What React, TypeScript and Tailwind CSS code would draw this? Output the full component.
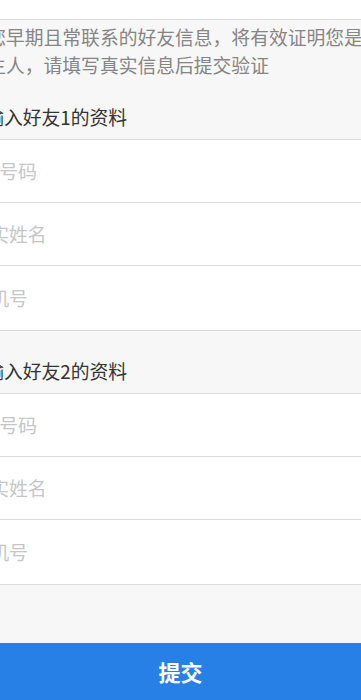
import React from "react";

function Row({ ph, h }: { ph: string; h: string }) {
  return (
    <div className={`${h} flex items-center overflow-hidden bg-white border-b border-[#dcdcdc]`}>
      <input
        className="ml-[-28.5px] w-[calc(100%+28.5px)] bg-transparent outline-none text-[18.8px] text-[#333] placeholder:text-[#c6c6c6]"
        placeholder={ph}
      />
    </div>
  );
}

function Group() {
  return (
    <div className="border-t border-[#dcdcdc]">
      <Row ph="QQ号码" h="h-[63px]" />
      <Row ph="真实姓名" h="h-[63px]" />
      <Row ph="手机号" h="h-[65px]" />
    </div>
  );
}

function Title({ text, pt }: { text: string; pt: string }) {
  return (
    <div className={`overflow-hidden ${pt} pb-[8px]`}>
      <div className="ml-[-14.8px] text-[18.8px] leading-[28px] text-[#333] whitespace-nowrap">{text}</div>
    </div>
  );
}

export default function App() {
  return (
    <div
      lang="zh-CN"
      className="w-[361px] h-[700px] flex flex-col bg-[#f7f7f7] overflow-hidden"
      style={{ fontFamily: '"Noto Sans CJK SC", "Noto Sans", sans-serif' }}
    >
      <div className="h-[20px] shrink-0 bg-white border-b border-[#dedede]" />
      <div className="overflow-hidden pt-[3px]">
        <div className="ml-[-12.8px] text-[18.8px] leading-[28px] text-[#858585] whitespace-nowrap">
          <div>您早期且常联系的好友信息，将有效证明您是帐号</div>
          <div>主人，请填写真实信息后提交验证</div>
        </div>
      </div>
      <Title text="输入好友1的资料" pt="pt-[24px]" />
      <Group />
      <Title text="输入好友2的资料" pt="pt-[26px]" />
      <Group />
      <div className="flex-1" />
      <button className="h-[57px] shrink-0 bg-[#2680e5] text-white text-[22px] font-bold flex items-center justify-center">
        提交
      </button>
    </div>
  );
}
